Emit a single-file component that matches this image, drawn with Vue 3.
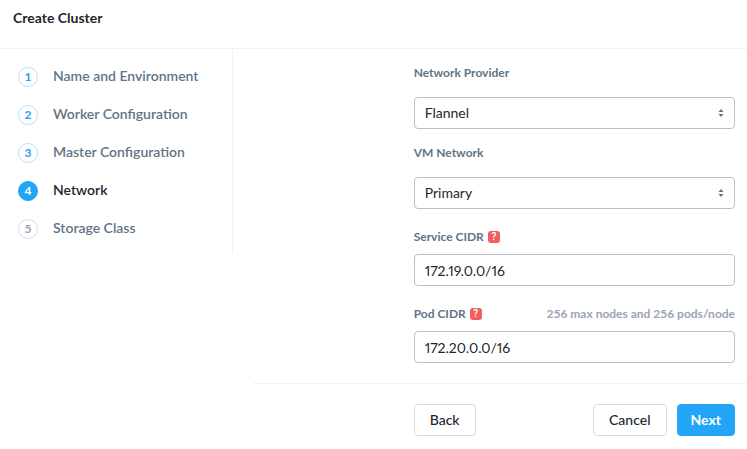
<script setup>
import { ref } from 'vue'

const steps = [
  { number: 1, label: 'Name and Environment', state: 'done' },
  { number: 2, label: 'Worker Configuration', state: 'done' },
  { number: 3, label: 'Master Configuration', state: 'done' },
  { number: 4, label: 'Network', state: 'current' },
  { number: 5, label: 'Storage Class', state: 'upcoming' },
]

const provider = ref('Flannel')
const vmNetwork = ref('Primary')
const serviceCidr = ref('172.19.0.0/16')
const podCidr = ref('172.20.0.0/16')
</script>

<template>
  <div class="wizard">
    <header class="header">
      <h1 class="title">Create Cluster</h1>
    </header>

    <div class="body">
      <nav class="sidebar">
        <ol class="steps">
          <li v-for="step in steps" :key="step.number" class="step" :class="step.state">
            <span class="badge">{{ step.number }}</span>
            <span class="step-label">{{ step.label }}</span>
          </li>
        </ol>
      </nav>

      <form class="main" @submit.prevent>
        <div class="row fields-row">
          <div class="fields">
            <div class="field">
              <label class="label" for="provider">Network Provider</label>
              <div class="select">
                <select id="provider" v-model="provider" class="control">
                  <option>Flannel</option>
                </select>
                <svg class="arrows" viewBox="0 0 6 8" width="6" height="8" aria-hidden="true">
                  <path d="M3 0L5.5 3H.5zM3 8L.5 5h5z" fill="#627386" />
                </svg>
              </div>
            </div>

            <div class="field">
              <label class="label" for="vm-network">VM Network</label>
              <div class="select">
                <select id="vm-network" v-model="vmNetwork" class="control">
                  <option>Primary</option>
                </select>
                <svg class="arrows" viewBox="0 0 6 8" width="6" height="8" aria-hidden="true">
                  <path d="M3 0L5.5 3H.5zM3 8L.5 5h5z" fill="#627386" />
                </svg>
              </div>
            </div>

            <div class="field text-field">
              <div class="label-line">
                <label class="label" for="service-cidr">Service CIDR</label>
                <span class="help">?</span>
              </div>
              <input id="service-cidr" v-model="serviceCidr" class="control" type="text" />
            </div>

            <div class="field text-field">
              <div class="label-line">
                <label class="label" for="pod-cidr">Pod CIDR</label>
                <span class="help">?</span>
                <span class="hint">256 max nodes and 256 pods/node</span>
              </div>
              <input id="pod-cidr" v-model="podCidr" class="control" type="text" />
            </div>
          </div>
        </div>

        <footer class="row footer">
          <div class="actions">
            <button class="button" type="button">Back</button>
            <button class="button cancel" type="button">Cancel</button>
            <button class="button primary" type="submit">Next</button>
          </div>
        </footer>
      </form>
    </div>
  </div>
</template>

<style>
body {
  background: #fff;
}
</style>

<style scoped>
.wizard,
.control,
.button {
  font-family: Lato, "Liberation Sans", sans-serif;
  font-size: 14px;
  line-height: 20px;
}

.wizard {
  color: #22272e;
}

.header {
  padding: 8px 13px 20px;
  border-bottom: 1px solid #f2f2f2;
}

.title {
  margin: 0;
  font-size: 14px;
  line-height: 20px;
  font-weight: 700;
}

.body {
  display: flex;
  align-items: flex-start;
  gap: 20px;
}

.sidebar {
  box-sizing: border-box;
  flex: 0 0 233px;
  padding: 18px 16px 14px 18px;
  border-right: 1px solid #f2f2f2;
}

.steps {
  display: flex;
  flex-direction: column;
  gap: 18px;
  margin: 0;
  padding: 0;
  list-style: none;
}

.step {
  display: flex;
  align-items: flex-start;
  gap: 15px;
  color: #627386;
  font-weight: 600;
}

.step-label {
  line-height: 18px;
}

.badge {
  display: flex;
  align-items: center;
  justify-content: center;
  box-sizing: border-box;
  width: 20px;
  height: 20px;
  border: 1px solid #b9e1fc;
  border-radius: 50%;
  color: #22a5f7;
  font-size: 12px;
  font-weight: 700;
}

.current {
  color: #22272e;
}

.current .badge {
  border-color: #22a5f7;
  background: #22a5f7;
  color: #fff;
}

.upcoming .badge {
  border-color: #d8dbe2;
  color: #9aa5b5;
}

.main {
  flex: 1;
  min-width: 0;
}

.row {
  display: grid;
  grid-template-columns: 1fr 2fr;
  padding-right: 12px;
}

.fields-row {
  padding-top: 16px;
  padding-bottom: 20px;
}

.fields,
.actions {
  grid-column: 2;
  min-width: 0;
}

.fields {
  display: flex;
  flex-direction: column;
  gap: 16px;
}

.field {
  display: flex;
  flex-direction: column;
  gap: 16px;
}

.text-field {
  gap: 9px;
  margin-top: 4px;
}

.label,
.hint {
  color: #627386;
  font-size: 12px;
  line-height: 16px;
  font-weight: 700;
}

.label-line {
  display: flex;
  align-items: center;
  gap: 4px;
}

.hint {
  margin-left: auto;
  color: #9aa5b5;
}

.help {
  width: 12px;
  height: 12px;
  border-radius: 3px;
  background: #f15f60;
  color: #fff;
  font-family: Roboto, "Liberation Sans", sans-serif;
  font-size: 10px;
  line-height: 12px;
  font-weight: 500;
  text-align: center;
}

.select {
  position: relative;
}

.arrows {
  position: absolute;
  top: 12px;
  right: 11px;
  pointer-events: none;
}

.control {
  display: block;
  box-sizing: border-box;
  width: 100%;
  height: 32px;
  margin: 0;
  padding: 0 10px;
  appearance: none;
  border: 1px solid #b8bfca;
  border-radius: 4px;
  background: #fff;
  color: #22272e;
  font-weight: 400;
  font-variant-numeric: proportional-nums;
}

.footer {
  padding-top: 20px;
  padding-bottom: 12px;
  border-top: 1px solid #f2f2f2;
}

.actions {
  display: flex;
  gap: 10px;
}

.button {
  height: 32px;
  padding: 0 15px;
  border: 1px solid #d8dbe2;
  border-radius: 4px;
  background: #fff;
  color: #22272e;
  font-weight: 500;
}

.cancel {
  margin-left: auto;
}

.primary {
  padding: 0 13px;
  border-color: #22a5f7;
  background: #22a5f7;
  color: #fff;
  font-weight: 700;
}
</style>
